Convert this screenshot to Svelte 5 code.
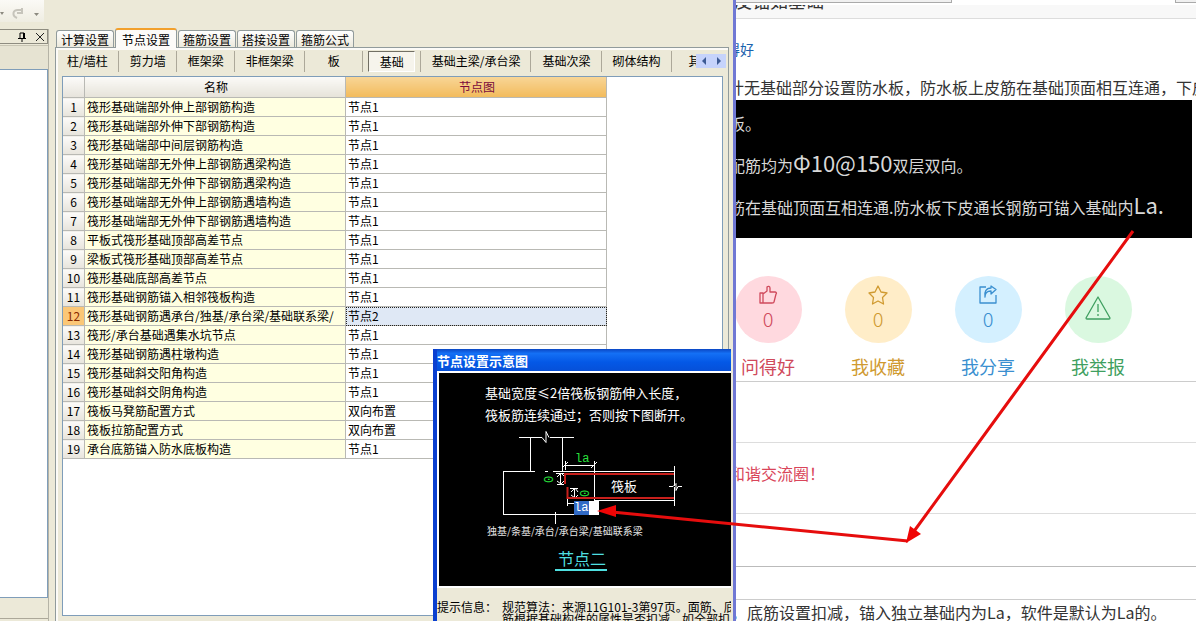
<script lang="ts">
	const tabs = ['计算设置', '节点设置', '箍筋设置', '搭接设置', '箍筋公式']
	const parts = [
		'柱/墙柱',
		'剪力墙',
		'框架梁',
		'非框架梁',
		'板',
		'基础',
		'基础主梁/承台梁',
		'基础次梁',
		'砌体结构',
		'其它'
	]
	const rows = [
		['筏形基础端部外伸上部钢筋构造', '节点1'],
		['筏形基础端部外伸下部钢筋构造', '节点1'],
		['筏形基础端部中间层钢筋构造', '节点1'],
		['筏形基础端部无外伸上部钢筋遇梁构造', '节点1'],
		['筏形基础端部无外伸下部钢筋遇梁构造', '节点1'],
		['筏形基础端部无外伸上部钢筋遇墙构造', '节点1'],
		['筏形基础端部无外伸下部钢筋遇墙构造', '节点1'],
		['平板式筏形基础顶部高差节点', '节点1'],
		['梁板式筏形基础顶部高差节点', '节点1'],
		['筏形基础底部高差节点', '节点1'],
		['筏形基础钢筋锚入相邻筏板构造', '节点1'],
		['筏形基础钢筋遇承台/独基/承台梁/基础联系梁/', '节点2'],
		['筏形/承台基础遇集水坑节点', '节点1'],
		['筏形基础钢筋遇柱墩构造', '节点1'],
		['筏形基础斜交阳角构造', '节点1'],
		['筏形基础斜交阴角构造', '节点1'],
		['筏板马凳筋配置方式', '双向布置'],
		['筏板拉筋配置方式', '双向布置'],
		['承台底筋锚入防水底板构造', '节点1']
	]

	let currentTab = $state('节点设置')
	let currentPart = $state('基础')
	let currentRow = $state(11)
	let anchor = $state('la')
</script>

<div class="screen">
	<div class="window">
		<div class="toolbar">
			<div class="tools">
				<svg width="44" height="22" viewBox="0 0 44 22">
					<path d="M0 12h4l-2 3zM34 13h5l-2.500 3z" fill="#8c8a80" />
					<path d="M17 18c-5-2-5-9 2-8h3M22 8v5h-5" fill="none" stroke="#c6c4bb" stroke-width="2" />
				</svg>
			</div>
		</div>
		<div class="body">
			<aside class="dock">
				<div class="dock-head">
					<button aria-label="固定">
						<svg width="10" height="10" viewBox="0 0 10 10">
							<path d="M3 1v5M3 1h4M1 6.500h8M5 7v3" fill="none" stroke="#000" />
							<path d="M6 1h2v5H6z" />
						</svg>
					</button>
					<button aria-label="关闭">
						<svg width="10" height="10" viewBox="0 0 10 10">
							<path d="M1 1l8 8M9 1l-8 8" stroke="#222" />
						</svg>
					</button>
				</div>
				<div class="dock-bar"></div>
				<div class="dock-list"></div>
				<div class="dock-foot"></div>
			</aside>

			<main>
				<nav class="tabs">
					{#each tabs as tab}
						<button class:current={currentTab == tab} onclick={() => (currentTab = tab)}>{tab}</button>
					{/each}
				</nav>
				<div class="pane">
					<div class="parts">
						<div class="parts-list">
							{#each parts as part}
								<div class="part">
									<button class:pressed={currentPart == part} onclick={() => (currentPart = part)}>{part}</button>
								</div>
							{/each}
						</div>
						<div class="scroll">
							<button aria-label="向左"><svg width="6" height="8" viewBox="0 0 6 8"><path d="M5 0v8L1 4z" /></svg></button>
							<button aria-label="向右"><svg width="6" height="8" viewBox="0 0 6 8"><path d="M1 0v8l4-4z" /></svg></button>
						</div>
					</div>
					<div class="sheet">
						<table>
							<thead>
								<tr>
									<th class="num"></th>
									<th>名称</th>
									<th class="picked">节点图</th>
								</tr>
							</thead>
							<tbody>
								{#each rows as [name, value], i}
									<tr class:selected={currentRow == i} onclick={() => (currentRow = i)}>
										<td class="num">{i + 1}</td>
										<td class="name">{name}</td>
										<td class="value">{value}</td>
									</tr>
								{/each}
							</tbody>
						</table>
					</div>
				</div>
			</main>
		</div>

		<section class="popup">
			<h2>节点设置示意图</h2>
			<div class="canvas">
				<svg width="292" height="213" viewBox="439 373 292 213">
					<g class="caption">
						<text x="485" y="398">基础宽度≤2倍筏板钢筋伸入长度，</text>
						<text x="485" y="420">筏板筋连续通过；否则按下图断开。</text>
						<text x="611" y="491">筏板</text>
					</g>
					<g fill="none" stroke="#fff" shape-rendering="crispEdges">
						<path d="M519 437.500h23M550 437.500h24M530.500 437v34M562.500 437v34" />
						<path d="M535 471.500H503.500V514.500H574M545 471.500h3M553 471.500h121" />
						<path d="M594.500 461v39M594 500.500h80M674.500 466v20M674.500 487v19" />
						<path d="M564 465.500h31M565.500 461v9M555.500 512v12" />
						<path d="M560.500 474v10M556 473.500h8M557 484.500h7M574.500 489v9M570 488.500h8M570 498.500h8M567.500 499v7M567 503.500h7" />
					</g>
					<g fill="none" stroke="#fff">
						<path d="M542 437.500l4 5v-11l3 6" />
						<path d="M669 486.500h4l3-3v7l2-4h4" />
						<path d="M562 468l6-6M591 468l6-6M557 477l4-4 4 4M557 481l4 3 3-3M571 492l4-4 3 4M571 495l4 3 3-3" />
					</g>
					<path d="M674 474H565v10M567.500 487v11H674" fill="none" stroke="#c8201c" stroke-width="2" />
					<g class="dim">
						<text x="575" y="462">la</text>
						<text transform="translate(553 483) rotate(-90)">0</text>
						<text transform="translate(589 497) rotate(-90)">0</text>
					</g>
					<text class="parts-note" x="487" y="535">独基/条基/承台/承台梁/基础联系梁</text>
					<text class="node-name" x="558" y="565">节点二</text>
					<path d="M555 570h52" stroke="#4fdfe0" stroke-width="2" />
				</svg>
				<input aria-label="锚固长度" bind:value={anchor} />
			</div>
			<div class="hint">
				<span>提示信息：</span>
				<p>规范算法：来源11G101-3第97页。面筋、底<br />筋根据基础构件的属性是否扣减，如全部扣</p>
			</div>
		</section>
	</div>

	<div class="page">
		<div class="strip"><span></span><span></span></div>
		<header><h1>皮锚如基础</h1></header>
		<article>
			<a class="good" href="#good">得好</a>
			<p class="question">计无基础部分设置防水板，防水板上皮筋在基础顶面相互连通，下皮</p>
		</article>
		<div class="cad">
			<p>板。</p>
			<p>配筋均为<span>Φ10@150 </span>双层双向。</p>
			<p>筋在基础顶面互相连通.防水板下皮通长钢筋可锚入基础内<span>La.</span></p>
			<p>配筋均为</p>
		</div>
		<div class="actions">
			<button class="like">
				<span class="disc">
					<svg width="20" height="20" viewBox="0 0 20 20"><path d="M2 8h3v10H2zM5 9l4-3V2c1-1 3-1 3 1v4h5c1 0 2 1 1 2l-2 8c0 1-1 1-2 1H5" /></svg>
					<b>0</b>
				</span>
				问得好
			</button>
			<button class="fav">
				<span class="disc">
					<svg width="20" height="20" viewBox="0 0 20 20"><path d="M10 1l3 6 6 1-4.500 4.500 1 6.500-5.500-3-5.500 3 1-6.500L1 8l6-1z" /></svg>
					<b>0</b>
				</span>
				我收藏
			</button>
			<button class="share">
				<span class="disc">
					<svg width="20" height="20" viewBox="0 0 20 20"><path d="M8 2H2v16h16v-8M7 12c0-5 3-6 6-6v3l5-4.500L13 1v2c-5 0-7 4-6 9z" /></svg>
					<b>0</b>
				</span>
				我分享
			</button>
			<button class="report">
				<span class="disc">
					<svg width="28" height="26" viewBox="0 0 28 26"><path d="M14 2L2 23q0 1 1 1h22q1 0 1-1zM14 9v8M14 19v2" /></svg>
				</span>
				我举报
			</button>
		</div>
		<div class="blank"></div>
		<p class="slogan">和谐交流圈！</p>
		<div class="gap"></div>
		<div class="gap small"></div>
		<p class="answer">，底筋设置扣减，锚入独立基础内为La，软件是默认为La的。</p>
	</div>

	<svg class="arrows" viewBox="0 0 1196 621">
		<path d="M1133 231L912 534M908 541L612 512" stroke="#e60d0d" stroke-width="3" />
		<path d="M906 543l4-17 11 8zM597 511l19-6v12z" fill="#f00505" />
	</svg>
</div>

<style>
	:global(body) {
		margin: 0;
	}
	.screen {
		position: relative;
		display: grid;
		grid-template-columns: 8fr 5fr;
		height: 100vh;
		overflow: hidden;
		font-family: 'Noto Sans CJK SC', sans-serif;
		font-size: 12px;
		color: #000;
		background: #fff;
	}
	button {
		padding: 0;
		border: 0;
		background: none;
		font: inherit;
		color: inherit;
		white-space: nowrap;
	}
	p,
	h1,
	h2 {
		margin: 0;
		font-weight: normal;
		white-space: nowrap;
	}
	.window {
		position: relative;
		z-index: 1;
		display: flex;
		flex-direction: column;
		min-width: 0;
		height: 100vh;
		box-sizing: border-box;
		border-right: 3px solid #7078d4;
		background: #ece9d8;
	}
	.toolbar {
		height: 28px;
		flex: none;
	}
	.tools {
		width: 44px;
		height: 22px;
		background: linear-gradient(#fbfaf6, #efede2);
	}
	.body {
		display: flex;
		flex: 1;
		min-height: 0;
	}

	/* docked panel */
	.dock {
		display: flex;
		flex-direction: column;
		width: 49px;
		margin: 1px 6px 0 0;
		flex: none;
		border-right: 1px solid #b5b3a6;
		box-sizing: border-box;
	}
	.dock-head {
		display: flex;
		justify-content: flex-end;
		align-items: center;
		gap: 8px;
		height: 15px;
		padding-right: 2px;
		box-sizing: border-box;
		border: 1px solid #8e8c80;
		border-left: 0;
	}
	.dock-head button {
		display: flex;
	}
	.dock-bar {
		height: 23px;
		border-top: 1px solid #c8c5b4;
		margin-top: 1px;
		background: #e6e3d2;
	}
	.dock-list {
		flex: 1;
		border: 1px solid #7f9db9;
		border-left: 0;
		background: #fff;
	}
	.dock-foot {
		height: 20px;
		margin-bottom: 2px;
		border-bottom: 1px solid #aca899;
	}

	/* main settings */
	main {
		display: flex;
		flex-direction: column;
		flex: 1;
		min-width: 0;
		margin-right: 4px;
	}
	.tabs {
		display: flex;
		align-items: flex-end;
		gap: 1px;
		height: 19px;
		padding-left: 1px;
	}
	.tabs button {
		height: 17px;
		padding: 0 4px;
		border: 1px solid #919b9c;
		border-bottom: 0;
		border-radius: 3px 3px 0 0;
		background: linear-gradient(#fff, #ece9dc);
		line-height: 17px;
	}
	.tabs button.current {
		position: relative;
		height: 20px;
		margin-bottom: -1px;
		padding: 0 6px;
		border-top: 2px solid #f2a02c;
		background: #fcfbf8;
	}
	.pane {
		display: flex;
		flex-direction: column;
		flex: 1;
		min-height: 0;
		padding: 2px 5px 5px 0;
		border: 1px solid #919b9c;
		border-bottom: 0;
		box-shadow: inset 2px 2px 0 #fcfbf8;
	}
	.parts {
		display: flex;
		align-items: center;
		height: 22px;
	}
	.parts-list {
		display: flex;
		flex: 1;
		min-width: 0;
		overflow: hidden;
	}
	.part {
		display: flex;
		justify-content: center;
		flex: none;
		min-width: 58px;
		box-sizing: border-box;
		border-right: 1px solid #aca899;
	}
	.part button {
		height: 21px;
		padding: 0 10px 0 11px;
		line-height: 20px;
	}
	.part button.pressed {
		border: 1px solid #fff;
		border-top-color: #716f64;
		border-left-color: #716f64;
		background: #f6f4ec;
	}
	.scroll {
		display: flex;
		flex: none;
		width: 30px;
		height: 14px;
		margin-right: -3px;
		background: #c6d3fb;
	}
	.scroll button {
		display: flex;
		flex: 1;
		align-items: center;
		justify-content: center;
	}
	.scroll path {
		fill: #3d5a94;
	}
	.sheet {
		flex: 1;
		min-height: 0;
		margin: 4px 0 0 6px;
		overflow: hidden;
		border: 1px solid #7f9db9;
		background: #fff;
	}
	table {
		width: 544px;
		table-layout: fixed;
		border-collapse: collapse;
	}
	th,
	td {
		height: 18px;
		padding: 0 0 0 2px;
		overflow: hidden;
		border: 1px solid #b9b9b4;
		border-width: 0 1px 1px 0;
		line-height: 18px;
		font-weight: normal;
		text-align: left;
		white-space: nowrap;
	}
	th {
		height: 20px;
		background: linear-gradient(#fbfaf7, #e6e3d9);
		text-align: center;
	}
	th.picked {
		background: linear-gradient(#f8d596, #f2bb5c);
		color: #7a0a3c;
	}
	.num {
		width: 21px;
		padding: 0;
		background: linear-gradient(#fcfbf9, #e7e4dc);
		text-align: center;
	}
	.name {
		background: #ffffe1;
	}
	.selected .num {
		background: #fbc777;
		color: #8a2a00;
	}
	.selected .value {
		background: #dfe8f5;
		outline: 1px dotted #222;
		outline-offset: -1px;
	}

	/* floating diagram */
	.popup {
		position: absolute;
		top: 349px;
		right: 2px;
		bottom: 0;
		width: 298px;
		box-sizing: border-box;
		overflow: hidden;
		border-left: 4px solid #0a3fd0;
		background: #ece9d8;
	}
	h2 {
		height: 22px;
		background: linear-gradient(#0b47c4, #1470f5 20%, #0458e6 60%, #0650d8);
		font-size: 13px;
		line-height: 24px;
		font-weight: bold;
		color: #fff;
	}
	.canvas {
		position: relative;
		border: 2px solid #fff;
		border-width: 2px 0 2px 2px;
		background: #000;
	}
	.canvas svg {
		display: block;
	}
	.canvas input {
		position: absolute;
		left: 135px;
		top: 128px;
		width: 25px;
		height: 14px;
		box-sizing: border-box;
		padding: 0;
		border: 0;
		background: linear-gradient(90deg, #316ac5 15px, #fff 15px);
		font: 12px 'Liberation Mono', monospace;
		color: #fff;
	}
	.caption {
		fill: #fff;
		font-size: 13px;
	}
	.dim {
		fill: #28e03c;
		font-family: 'Liberation Mono', monospace;
		font-size: 12px;
	}
	.parts-note {
		fill: #e4e4e4;
		font-size: 10px;
	}
	.node-name {
		fill: #4fdfe0;
		font-size: 16px;
	}
	.hint {
		display: flex;
		gap: 4px;
		margin-top: 13px;
		line-height: 12px;
	}
	.hint span {
		flex: none;
		width: 61px;
	}

	/* forum page */
	.page {
		min-width: 0;
		overflow: hidden;
		color: #333;
		font-size: 16px;
		line-height: 24px;
	}
	.strip {
		display: flex;
		justify-content: space-between;
		height: 3px;
	}
	.strip span {
		width: 216px;
		background: #f0f0f0;
		border: 1px solid #aaa;
		border-width: 0 1px 1px 0;
		box-sizing: border-box;
	}
	.strip span:last-child {
		width: 21px;
		border-width: 0 0 1px 1px;
	}
	header {
		display: flex;
		align-items: flex-start;
		height: 13px;
		margin-top: 2px;
		overflow: hidden;
		border-bottom: 1px solid #ddd;
		background: #f8f8f8;
	}
	h1 {
		margin: -17px 0 0 -2px;
		font-size: 18px;
		line-height: 24px;
	}
	article {
		padding-top: 18px;
		margin-left: -8px;
	}
	.good {
		display: block;
		font-size: 14px;
		margin-left: -2px;
		text-decoration: none;
		color: #1a62ad;
	}
	.question {
		margin-top: 14px;
		padding-bottom: 1px;
	}
	.cad {
		height: 138px;
		margin-right: 4px;
		overflow: hidden;
		background: #000;
		color: #d8d8d8;
		font-weight: 300;
	}
	.cad p {
		height: 42px;
		margin-left: -7px;
		line-height: 46px;
	}
	.cad span {
		font-size: 22px;
		line-height: 0;
	}
	.actions {
		display: flex;
		margin: 38px 0 0 -23px;
		padding-bottom: 1px;
		border-bottom: 1px solid #ccc;
	}
	.actions button {
		display: flex;
		flex-direction: column;
		align-items: center;
		gap: 10px;
		width: 110px;
		font-size: 18px;
		line-height: 27px;
	}
	.disc {
		display: flex;
		flex-direction: column;
		align-items: center;
		justify-content: center;
		gap: 2px;
		width: 67px;
		height: 67px;
		box-sizing: border-box;
		padding-bottom: 4px;
		border-radius: 50%;
	}
	.disc svg {
		fill: none;
		stroke: currentColor;
		stroke-width: 1.3;
		stroke-linejoin: round;
	}
	.disc b {
		font-size: 20px;
		line-height: 24px;
		font-weight: 300;
	}
	.like {
		color: #d04a5c;
	}
	.like .disc {
		background: #ffd9df;
	}
	.fav {
		color: #d09a30;
	}
	.fav .disc {
		background: #ffedc8;
	}
	.share {
		color: #3a8fd0;
	}
	.share .disc {
		background: #d4f0ff;
	}
	.report {
		color: #3f9f60;
	}
	.report .disc {
		background: #daf8e0;
	}
	.blank {
		height: 60px;
		border-bottom: 1px solid #ddd;
	}
	.slogan {
		padding: 18px 0 28px;
		margin-left: -7px;
		border-bottom: 1px solid #ddd;
		color: #d9455a;
	}
	.gap {
		height: 52px;
		border-bottom: 1px solid #bbb;
	}
	.gap.small {
		height: 32px;
		border-color: #ccc;
	}
	.answer {
		margin-left: -5px;
	}
	.arrows {
		position: absolute;
		z-index: 2;
		inset: 0;
		width: 100%;
		height: 100%;
		pointer-events: none;
	}
</style>
